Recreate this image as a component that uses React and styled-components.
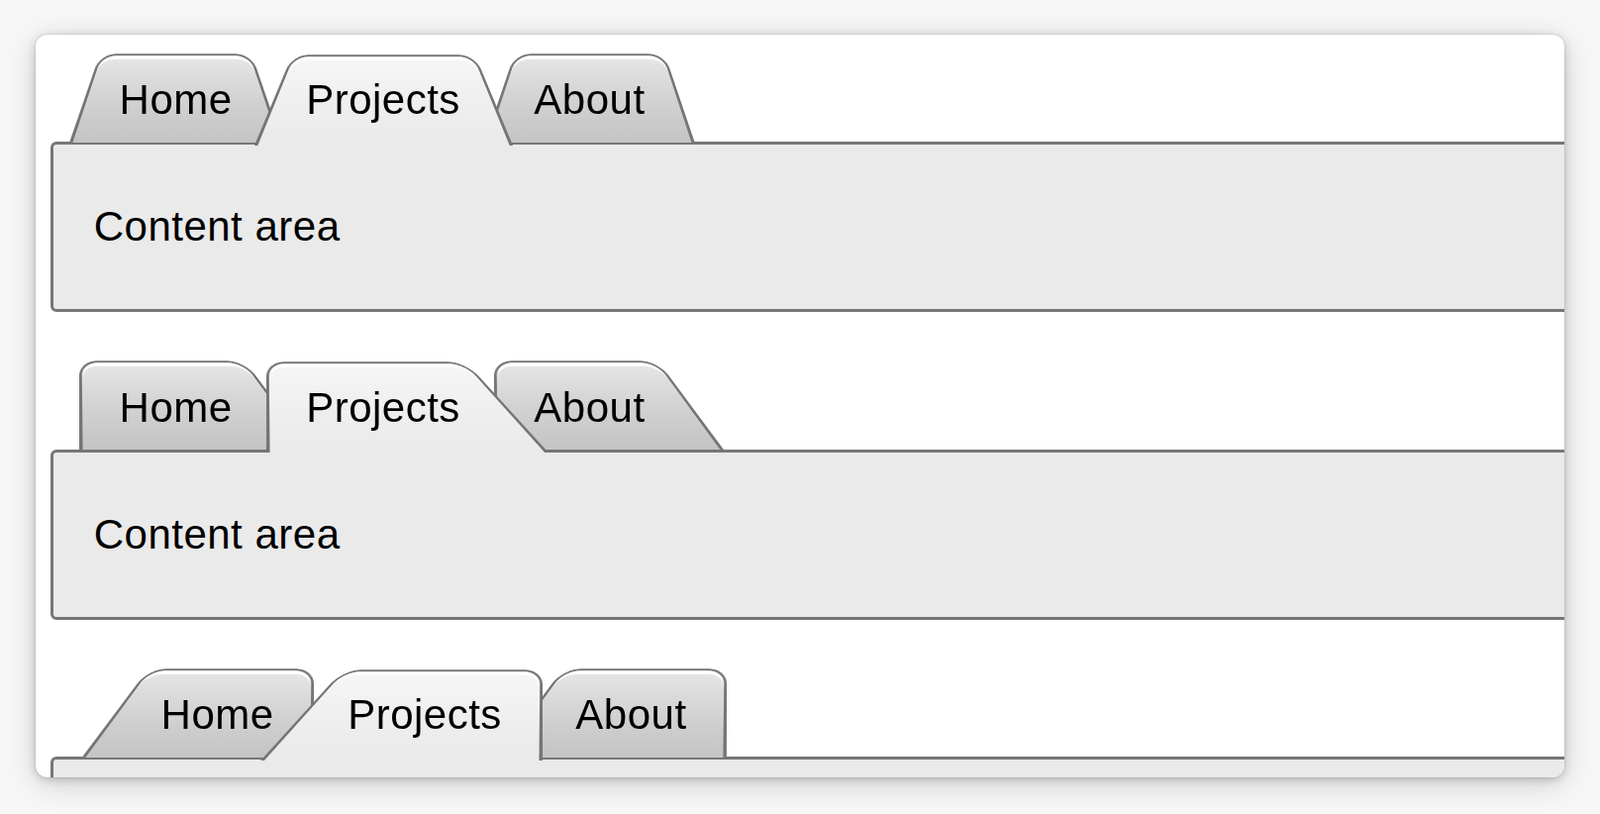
// Imports
import React from 'react';
import styled, { createGlobalStyle } from 'styled-components';

// Tab bar variants: where the trapezoid grows from
const VARIANTS = {
	center: { origin: 'bottom', scale: 'scale(1.1, 1.3)', indent: 29.4 },
	left: { origin: 'bottom left', scale: 'scale(1.2, 1.3)', indent: 29.4 },
	right: { origin: 'bottom right', scale: 'scale(1.2, 1.3)', indent: 71.4 },
};

const TABS = ['Home', 'Projects', 'About'];

// Composant
const TabSet = ({ variant, selected = 'Projects' }) => {
	return(
		<Section>
			{/* Tabs */}
			<TabBar $variant={ variant }>
				{
					TABS.map((label) => (
						<Tab key={ label } href="#" $variant={ variant } $selected={ label === selected }>
							{ label }
						</Tab>
					))
				}
			</TabBar>
			{/* Tabs */}

			{/* Content */}
			<Panel>Content area</Panel>
			{/* Content */}
		</Section>
	);
};

const App = () => {
	return(
		<>
			<GlobalStyle/>
			<Page>
				<Card>
					<TabSet variant="center"/>
					<TabSet variant="left"/>
					<TabSet variant="right"/>
				</Card>
			</Page>
		</>
	);
};

// Styled
const GlobalStyle = createGlobalStyle`
	html, body{
		margin: 0;
		padding: 0;
	}
	body{
		background: #f7f7f7;
		font-family: "Liberation Sans", Arial, sans-serif;
	}
`;

const Page = styled.div`
	box-sizing: border-box;
	height: 822px;
	padding: 35px 36px 37px 36px;
`;

const Card = styled.div`
	box-sizing: border-box;
	height: 750px;
	padding: 11.7px 0 0 14.7px;
	background: #fff;
	border-radius: 12px;
	overflow: hidden;
	box-shadow: 0 0 0 1px rgba(0,0,0,0.05), 0 2px 8px rgba(0,0,0,0.18), 0 6px 30px rgba(0,0,0,0.18);
	font-size: 42px;
	line-height: 2;
	letter-spacing: 0.5px;
	color: #000;
`;

const Section = styled.div`
	display: block;
`;

const TabBar = styled.nav`
	position: relative;
	z-index: 1;
	display: flex;
	padding-left: ${ (p) => VARIANTS[p.$variant].indent }px;
`;

const Tab = styled.a`
	position: relative;
	display: block;
	padding: 12.6px 40.5px 0;
	color: inherit;
	text-decoration: none;
	z-index: ${ (p) => p.$selected ? 2 : 'auto' };
	& + &{
		margin-left: -6.5px;
	}
	&::before{
		content: '';
		position: absolute;
		top: 0;
		right: 0;
		bottom: 0;
		left: 0;
		z-index: -1;
		margin-bottom: ${ (p) => p.$selected ? '-3px' : '0' };
		background-color: ${ (p) => p.$selected ? '#eaeaea' : '#c4c4c4' };
		background-image: linear-gradient(rgba(255,255,255,0.6), rgba(255,255,255,0));
		border: 3.2px solid #757575;
		border-bottom: none;
		border-radius: 21px 21px 0 0;
		box-shadow: inset 0 5px #fff;
		transform: ${ (p) => VARIANTS[p.$variant].scale } perspective(21px) rotateX(5deg);
		transform-origin: ${ (p) => VARIANTS[p.$variant].origin };
	}
`;

const Panel = styled.main`
	display: block;
	margin: 0 -60px 42px 0;
	padding: 41px;
	background: #eaeaea;
	border: 3px solid #767676;
	border-radius: 6px;
`;

// Export
export default App;
